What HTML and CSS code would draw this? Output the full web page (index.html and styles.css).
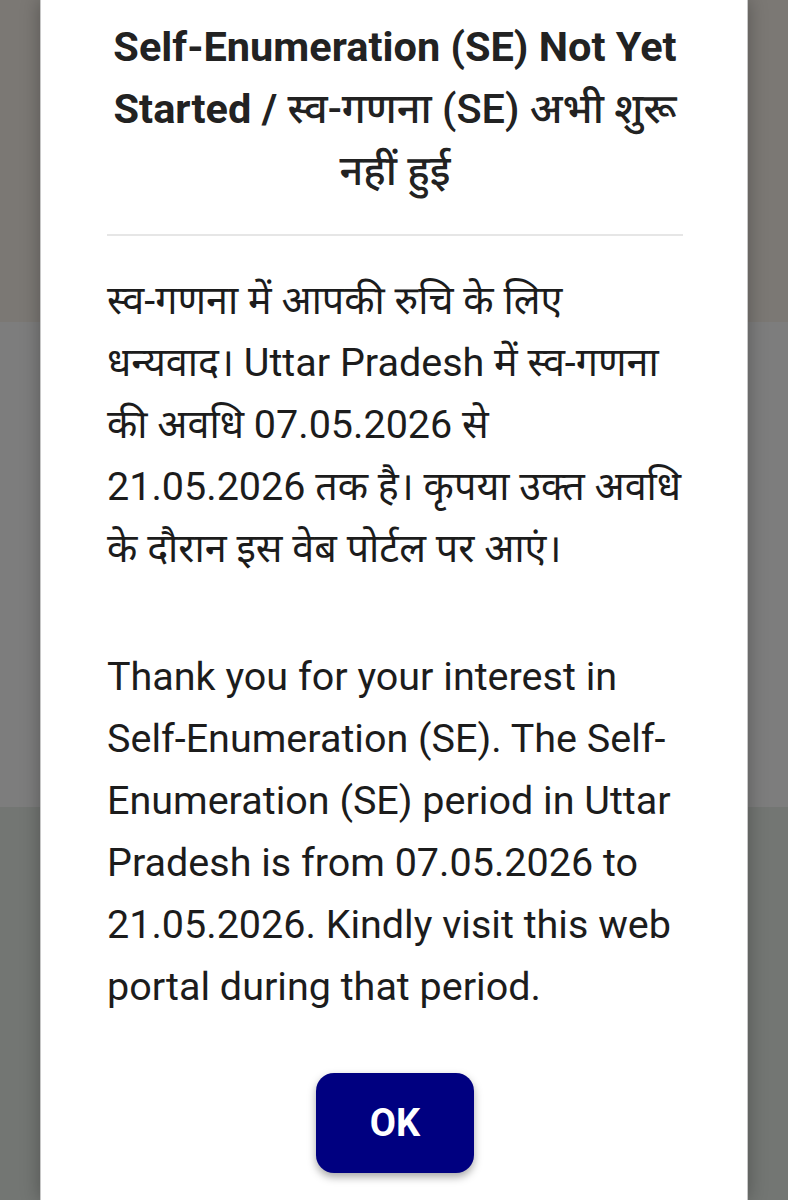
FILE: index.html
```html
<!DOCTYPE html>
<html lang="hi">
<head>
    <meta charset="UTF-8">
    <meta name="viewport" content="width=device-width, initial-scale=1.0">
    <title>Self-Enumeration</title>
    <link rel="stylesheet" href="styles.css">
</head>
<body>
    <div class="overlay">
        <!-- Dialog -->
        <div class="modal">
            <h2 class="modal-title">Self-Enumeration (SE) Not Yet Started / <span class="hi">स्व-गणना (SE) अभी शुरू नहीं हुई</span></h2>
            <hr class="divider">
            <div class="modal-body">
                <p>स्व-गणना में आपकी रुचि के लिए धन्यवाद। Uttar Pradesh में स्व-गणना की अवधि 07.05.2026 से 21.05.2026 तक है। कृपया उक्त अवधि के दौरान इस वेब पोर्टल पर आएं।</p>
                <p>Thank you for your interest in Self-Enumeration (SE). The Self-Enumeration (SE) period in Uttar Pradesh is from 07.05.2026 to 21.05.2026. Kindly visit this web portal during that period.</p>
            </div>
            <div class="modal-actions">
                <button class="ok-button">OK</button>
            </div>
        </div>
    </div>
</body>
</html>
```

FILE: styles.css
```css
* {
    margin: 0;
    padding: 0;
    box-sizing: border-box;
}

html, body {
    height: 100%;
}

body {
    font-family: Roboto, "Noto Sans Devanagari", "Noto Sans", sans-serif;
    background: linear-gradient(to bottom,
        #7b7874 0, #7b7874 322px,
        #7d7d7d 322px, #7d7d7d 807px,
        #737673 807px, #737673 100%);
    overflow: hidden;
}

.overlay {
    height: 100%;
    padding: 0 40px;
}

.modal {
    background-color: #ffffff;
    height: 100%;
    padding: 16px 64px 0 66px;
    box-shadow: 0 0 18px rgba(0, 0, 0, 0.3);
    border-left: 1px solid #c8c8c8;
    border-right: 1px solid #c8c8c8;
}

.modal-title {
    font-size: 41.5px;
    font-weight: 700;
    line-height: 62px;
    text-align: center;
    color: #222222;
}

.modal-title .hi {
    font-weight: 500;
}

.divider {
    border: none;
    border-top: 2px solid #e6e6e6;
    margin: 32px 0 34px;
}

.modal-body p {
    font-size: 39.5px;
    line-height: 62px;
    color: #1c1c1c;
}

.modal-body p + p {
    margin-top: 66px;
}

.modal-actions {
    display: flex;
    justify-content: center;
    margin-top: 55px;
}

.ok-button {
    width: 158px;
    height: 100px;
    background-color: #000080;
    color: #ffffff;
    border: none;
    border-radius: 18px;
    font-family: Roboto, sans-serif;
    font-size: 38px;
    font-weight: 700;
    box-shadow: 0 4px 8px rgba(0, 0, 0, 0.35);
    cursor: pointer;
}
```
